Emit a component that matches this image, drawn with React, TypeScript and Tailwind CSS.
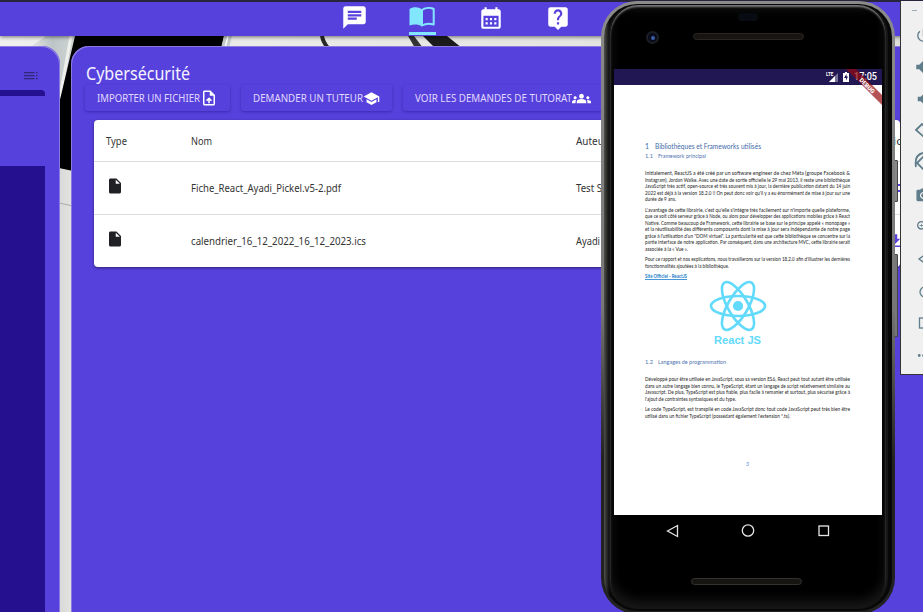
import React from "react";
import { MdChat, MdCalendarMonth, MdLiveHelp, MdOutlineUploadFile, MdSchool, MdGroups, MdInsertDriveFile, MdPowerSettingsNew, MdVolumeUp, MdVolumeDown, MdCameraAlt, MdZoomIn, MdMoreHoriz, MdFileDownload } from "react-icons/md";

function Wallpaper() {
  return (
    <svg className="absolute inset-0" width="923" height="612" aria-hidden="true">
      <defs>
        <linearGradient id="wall" x1="0" x2="1"><stop stopColor="#f0f0ee" /><stop offset="1" stopColor="#dededb" /></linearGradient>
        <linearGradient id="strip" x1="0" x2="1"><stop stopColor="#d8d9d8" /><stop offset="1" stopColor="#e4e4e2" /></linearGradient>
        <linearGradient id="shade" x1="0" x2="1"><stop stopColor="#e6e6e3" /><stop offset=".5" stopColor="#bdc6c7" /><stop offset="1" stopColor="#cfd5d5" /></linearGradient>
      </defs>
      <rect width="923" height="612" fill="url(#wall)" />
      <rect x="59" width="14" height="612" fill="url(#strip)" />
      <path d="M46 36H75L60 105V60L30 47Z" fill="url(#shade)" />
      <path d="M71 36L60 97" stroke="#efefec" strokeWidth="3" />
      <path d="M75 36H224L215 80H73V171L59 168V104Z" fill="#000" />
      <path d="M224 36H232L229 48H221Z" fill="#c5cacb" />
      <path d="M228 36l-3 12" stroke="#fff" strokeWidth="1.5" />
      <path d="M322 36Q323 42 328 48" stroke="#29292b" strokeWidth="4" fill="none" />
      <path d="M408 36H414L423 48H415Z" fill="#343437" />
      <path d="M423 36H447L462 48H435Z" fill="#1c1c1f" />
      <path d="M59 203L73 206" stroke="#aaa" />
    </svg>
  );
}

function BookIcon() {
  return (
    <svg width="26" height="20" viewBox="0 0 26 20">
      <path d="M13 2.500C9.500-.3 4-.3.500 2V18.500C4.500 17 9 17 13 19.300Z" fill="#82e6ff" />
      <path d="M13 3C16 .700 21 .300 24.700 2V17.600C21 16.300 16.500 16.500 13 18.500Z" fill="none" stroke="#82e6ff" strokeWidth="2" strokeLinejoin="round" />
    </svg>
  );
}

function TocIcon() {
  return (
    <svg width="14" height="8" viewBox="0 0 14 8" stroke="#302775" strokeWidth="1.100">
      <path d="M0 .6H10.500M12 .6h1.500M0 3.600H10.500M12 3.600h1.500M0 6.600H10.500M12 6.600h1.500" />
    </svg>
  );
}

function NavBar() {
  return (
    <header className="relative z-10 flex h-9 w-full border-t-2 border-[#27243b] bg-[#5741dc] pl-[341px] shadow-[0_1px_4px_#0008]">
      <div className="flex w-[68px] pt-[2px]"><MdChat className="size-[27px] text-white" /></div>
      <div className="w-[68px]"><div className="flex h-[33px] w-[27px] flex-col justify-between border-b-[3px] border-[#82e6ff] pt-[5px]"><BookIcon /></div></div>
      <div className="flex w-[67px] pt-[3px] pl-[1px]"><MdCalendarMonth className="size-[26px] text-white" /></div>
      <div className="flex pt-[3px] pl-[1px]"><MdLiveHelp className="size-[26px] text-white" /></div>
    </header>
  );
}

function SidePanel() {
  return (
    <aside className="flex h-[566px] w-[60px] shrink-0 flex-col rounded-tr-[18px] bg-[#5741dc] pr-[15px] shadow-[inset_-1px_1px_0_#8c7ae3]">
      <div className="flex h-[44px] justify-end pt-[26px] pr-[7px]"><TocIcon /></div>
      <div className="h-[6px] rounded-tr bg-[#25108f]" />
      <div className="mt-[70px] flex-1 bg-[#25108f]" />
    </aside>
  );
}

const actions = [
  { label: "IMPORTER UN FICHIER", Icon: MdOutlineUploadFile, box: "w-[145px]", text: "w-[103px]", icon: "size-[18px]", len: 103 },
  { label: "DEMANDER UN TUTEUR", Icon: MdSchool, box: "w-[151px]", text: "w-[110px]", icon: "size-[17px]", len: 110 },
  { label: "VOIR LES DEMANDES DE TUTORAT", Icon: MdGroups, box: "w-[199px]", text: "w-[157px]", icon: "size-[19px]", len: 157 },
];

interface FitTextProps {
  children: string;
  width: number;
  size: number;
  height: number;
  weight?: string;
}

function FitText({ children, width, size, height, weight = "400" }: FitTextProps) {
  return (
    <svg width={width} height={height} className="block shrink-0 overflow-visible">
      <text y={height * 0.78} fill="currentColor" fontSize={size} fontWeight={weight} textLength={width} lengthAdjust="spacingAndGlyphs">{children}</text>
    </svg>
  );
}

function FilesTable() {
  const rows = [
    ["Fiche_React_Ayadi_Pickel.v5-2.pdf", "Test S", 150],
    ["calendrier_16_12_2022_16_12_2023.ics", "Ayadi", 175],
  ] as const;
  return (
    <div className="mt-[9px] ml-[23px] h-[147px] w-[806px] overflow-hidden rounded bg-white text-[#333] shadow-[0_1px_3px_#0007]">
      <div className="flex h-[42px] items-center border-b border-[#dedede] pl-3">
        <div className="w-[85px] shrink-0"><FitText size={11} width={21} height={14}>Type</FitText></div>
        <div className="w-[385px] shrink-0"><FitText size={11} width={21} height={14}>Nom</FitText></div>
        <FitText size={11} width={32} height={14}>Auteur</FitText>
        <div className="ml-[285px]"><FitText size={11} width={9} height={14}>ic</FitText></div>
      </div>
      {rows.map(([name, author, width], i) => (
        <div key={name} className={i ? "flex h-[52px] items-center pl-3" : "flex h-[53px] items-center border-b border-[#dedede] pl-3"}>
          <div className="w-[85px] shrink-0 pb-[4px]"><MdInsertDriveFile className="size-[18px] text-[#202124]" /></div>
          <div className="w-[385px] shrink-0"><FitText size={11} width={width} height={14}>{name}</FitText></div>
          <FitText size={11} width={i ? 24 : 26} height={14}>{author}</FitText>
          {i ? <MdFileDownload className="ml-[286px] size-[18px] shrink-0 text-[#5741dc]" /> : <div className="ml-[286px] h-[8px] w-[14px] shrink-0 border-y-2 border-[#5741dc]" />}
        </div>
      ))}
    </div>
  );
}

function CoursePanel() {
  return (
    <main className="h-[566px] w-[852px] shrink-0 overflow-hidden rounded-tl-[18px] bg-[#5741dc] shadow-[inset_1px_1px_0_#8c7ae3]">
      <div className="flex h-[39px] items-end pl-[15px] text-[#f5f3ff]"><FitText size={17.5} width={104} height={22}>Cybersécurité</FitText></div>
      <div className="flex h-[26px] gap-[11px] pl-[14px]">
        {actions.map(({ label, Icon, box, text, icon, len }) => (
          <button key={label} className={`${box} flex shrink-0 items-center rounded-[3px] bg-[#5741dc] pl-3 text-[#e0daff] shadow-[0_1px_3px_#22108980]`}>
            <span className={text}><FitText size={11} width={len} height={14}>{label}</FitText></span>
            <Icon className={`${icon} shrink-0 text-white`} />
          </button>
        ))}
      </div>
      <FilesTable />
    </main>
  );
}

function ReactLogo() {
  return (
    <svg width="58" height="52" viewBox="-29 -26 58 52" fill="none" stroke="#61dafb" strokeWidth="2.600" className="overflow-visible">
      <ellipse rx="27" ry="10" />
      <ellipse rx="27" ry="10" transform="rotate(60)" />
      <ellipse rx="27" ry="10" transform="rotate(120)" />
      <circle r="5.100" fill="#61dafb" stroke="none" />
    </svg>
  );
}

function Para({ lines, last, className = "" }: { lines: string[]; last: number; className?: string }) {
  return (
    <div className={className}>
      {lines.map((l, i) => <FitText key={l} size={4.7} height={6.5} width={i === lines.length - 1 ? last : 205} weight="500">{l}</FitText>)}
    </div>
  );
}

function Document() {
  return (
    <article className="flex h-[430px] flex-col bg-white pt-[57px] pl-[31px] font-['Lato','Open_Sans',sans-serif] text-[#343434]">
      <div className="flex text-[#4069a8]"><div className="w-[10px]"><FitText size={7} width={4} height={9}>1</FitText></div><FitText size={7} width={106} height={9}>Bibliothèques et Frameworks utilisés</FitText></div>
      <div className="mt-[1px] flex text-[#4f75b1]"><div className="w-[13px]"><FitText size={5.5} width={8} height={8}>1.1</FitText></div><FitText size={5.5} width={48} height={8}>Framework principal</FitText></div>
      <Para className="mt-[10px]" last={31} lines={[
        "Initialement, ReactJS a été créé par un software engineer de chez Méta (groupe Facebook &",
        "Instagram), Jordan Walke. Avec une date de sortie officielle le 29 mai 2013, il reste une bibliothèque",
        "JavaScript très actif, open-source et très souvent mis à jour, la dernière publication datant du 14 juin",
        "2022 est déjà à la version 18.2.0 !! On peut donc voir qu'il y a eu énormément de mise à jour sur une",
        "durée de 9 ans.",
      ]} />
      <Para className="mt-[4px]" last={43} lines={[
        "L'avantage de cette librairie, c'est qu'elle s'intègre très facilement sur n'importe quelle plateforme,",
        "que ce soit côté serveur grâce à Node, ou alors pour développer des applications mobiles grâce à React",
        "Native. Comme beaucoup de Framework, cette librairie se base sur le principe appelé « monopage »",
        "et la réutilisabilité des différents composants dont la mise à jour sera indépendante de notre page",
        "grâce à l'utilisation d'un \"DOM virtuel\". La particularité est que cette bibliothèque se concentre sur la",
        "partie interface de notre application. Par conséquent, dans une architecture MVC, cette librairie serait",
        "associée à la « Vue ».",
      ]} />
      <Para className="mt-[4px]" last={84} lines={[
        "Pour ce rapport et nos explications, nous travaillerons sur la version 18.2.0 afin d'illustrer les dernières",
        "fonctionnalités ajoutées à la bibliothèque.",
      ]} />
      <div className="mt-[4px] h-[7px] w-[42px] border-b border-[#4797d8] text-[#237cc7]"><FitText size={4.7} width={42} height={6.5} weight="700">Site Officiel - ReactJS</FitText></div>
      <div className="ml-[64px]"><ReactLogo /></div>
      <div className="mt-[1px] ml-[69px] font-['Liberation_Sans',Arial,sans-serif] text-[#61dafb]"><FitText size={11.5} width={47} height={14} weight="700">React JS</FitText></div>
      <div className="mt-[11px] flex text-[#4f75b1]"><div className="w-[13px]"><FitText size={5.5} width={8} height={8}>1.2</FitText></div><FitText size={5.5} width={68} height={8}>Langages de programmation</FitText></div>
      <Para className="mt-[10px]" last={91} lines={[
        "Développé pour être utilisée en JavaScript, sous sa version ES6, React peut tout autant être utilisée",
        "dans un autre langage bien connu, le TypeScript, étant un langage de script relativement similaire au",
        "Javascript. De plus, TypeScript est plus fiable, plus facile à remanier et surtout, plus sécurisé grâce à",
        "l'ajout de contraintes syntaxiques et du type.",
      ]} />
      <Para className="mt-[4px]" last={145} lines={[
        "Le code TypeScript, est transpilé en code JavaScript donc tout code JavaScript peut très bien être",
        "utilisé dans un fichier TypeScript (possédant également l'extension *.ts).",
      ]} />
      <div className="mt-[42px] ml-[101px] text-[#5b8ed2]"><FitText size={5} width={3} height={7}>3</FitText></div>
    </article>
  );
}

function Phone() {
  return (
    <section className="absolute top-[1px] left-[601px] z-20 h-[613px] w-[294px]">
      <div className="absolute top-[159px] -right-[3px] h-[42px] w-[5px] rounded-[1px] border border-[#444] bg-[#888]" />
      <div className="absolute top-[253px] -right-[3px] h-[83px] w-[5px] rounded-[1px] border border-[#444] bg-[#777]" />
      <div className="relative h-full rounded-[36px] bg-linear-to-b from-[#8b8b8b] via-[#777] via-50% to-[#222] to-75% p-[3px]">
        <div className="h-full rounded-[33px] bg-linear-to-r from-[#50504d] via-[#080808] via-2% to-[#080808] to-98% px-[4px] pt-[1px] pb-[2px]">
          <div className="flex h-full flex-col rounded-[30px] border-x-2 border-[#171716] bg-linear-to-b from-[#151515] via-[#000] via-3% to-[#000] to-90% px-[4px] pt-[64px] shadow-[inset_0_2px_2px_#777,inset_0_-8px_12px_#181818]">
            <div className="absolute top-[12px] left-[137px] h-[8px] w-[20px] rounded-full bg-[#090b12]" />
            <div className="absolute top-[30px] left-[45px] flex size-[13px] items-center justify-center rounded-full border-2 border-[#1c1e25] bg-[#090b18]"><div className="size-[4px] rounded-full bg-[#3d5eaa]" /></div>
            <div className="absolute top-[32px] left-[92px] h-[7px] w-[111px] rounded-full border border-[#292725] bg-[#171411]" />
            <div className="relative overflow-hidden bg-white">
              <div className="flex h-[16px] items-center justify-end bg-[#211753] pr-[5px] font-[Roboto,sans-serif] text-white">
                <svg width="12" height="11" viewBox="0 0 12 11" className="mr-[5px]"><text y="4" fontSize="4.500" fontWeight="700" fill="white">LTE</text><path d="M12 1V10H3Z" fill="#777199" /><path d="M9 4V10H3Z" fill="white" /></svg>
                <svg width="6" height="10" viewBox="0 0 6 10" className="mr-[5px]"><path fill="#fff" d="M0 1H2V0H4V1H6V10H0Z" /><path fill="#211753" d="M3.500 2L1 6H3V8.500L5 4.500H3.500Z" /></svg>
                <FitText size={10} width={23} height={12} weight="500">17:05</FitText>
              </div>
              <Document />
              <svg width="38" height="38" className="absolute top-0 right-0"><path d="M2 0H12L38 26V36Z" fill="#96080e" fillOpacity=".7" /><text transform="translate(15 11.500) rotate(45)" fill="#fff" fontFamily="Roboto" fontSize="6" fontWeight="800" textLength="19">DEBUG</text></svg>
            </div>
            <svg width="268" height="30" fill="none" stroke="#e5e5e5" strokeWidth="1.300"><path d="M53.500 16L63.500 10.500V21.500Z" /><circle cx="134" cy="15.500" r="5.700" /><rect x="205" y="11" width="9.500" height="9.500" /></svg>
            <div className="absolute bottom-[29px] left-[90px] h-[7px] w-[111px] rounded-full border border-[#35322e] bg-[#171511]" />
          </div>
        </div>
      </div>
    </section>
  );
}

function EmulatorBar() {
  return (
    <aside className="absolute top-[1px] left-[900px] z-30 flex h-[374px] w-[23px] flex-col overflow-hidden border-b border-l border-[#333] bg-[#f0f0f0] text-[#607d8b]">
      <div className="ml-[11px] h-[18px] pt-[9px]"><div className="h-px w-[5px] bg-[#9aacb4]" /></div>
      <div className="flex h-[32px] w-9 shrink-0 items-center pl-[14px]"><MdPowerSettingsNew className="size-[17px] shrink-0" /></div>
      <div className="flex h-[32px] w-9 shrink-0 items-center pl-[13px]"><MdVolumeUp className="size-[18px] shrink-0" /></div>
      <div className="flex h-[32px] w-9 shrink-0 items-center pl-[13px]"><MdVolumeDown className="size-[18px] shrink-0" /></div>
      <svg width="36" height="64" fill="none" stroke="#607d8b" strokeWidth="1.800" className="shrink-0"><path d="M15 15L21 9L29 17L23 22Z M16 48L22 42L30 50L24 56Z M15 52Q13 40 22 38" /></svg>
      <div className="flex h-[32px] w-9 shrink-0 items-center pl-[14px]"><MdCameraAlt className="size-[17px] shrink-0" /></div>
      <div className="flex h-[32px] w-9 shrink-0 items-center pl-[14px]"><MdZoomIn className="size-[16px] shrink-0" /></div>
      <svg width="36" height="104" fill="none" stroke="#607d8b" strokeWidth="1.300" className="shrink-0"><path d="M25 11L18 16L25 21" /><circle cx="24" cy="49" r="5" /><rect x="18.500" y="75" width="10" height="10" /></svg>
      <div className="flex w-9 pl-[14px]"><MdMoreHoriz className="size-[17px] shrink-0" /></div>
    </aside>
  );
}

export default function App() {
  return (
    <div className="relative h-[612px] w-[923px] overflow-hidden font-['Noto_Sans','Open_Sans',sans-serif]">
      <Wallpaper />
      <NavBar />
      <div className="relative mt-[10px] flex gap-[11px]"><SidePanel /><CoursePanel /></div>
      <Phone />
      <EmulatorBar />
    </div>
  );
}
